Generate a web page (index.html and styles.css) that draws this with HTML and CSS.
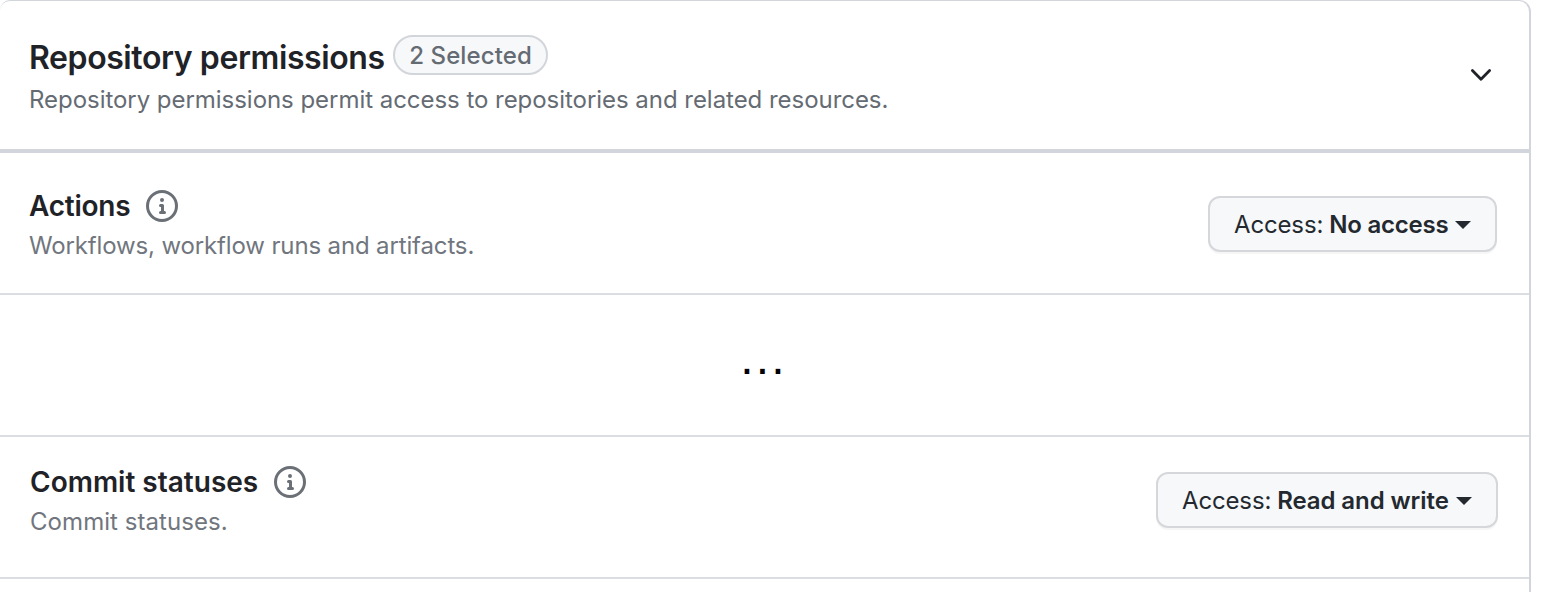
FILE: index.html
```html
<!DOCTYPE html>
<html lang="en">
<head>
<meta charset="utf-8">
<title>Repository permissions</title>
<link rel="stylesheet" href="styles.css">
</head>
<body>
<main class="panel">
  <header class="row head">
    <div class="info">
      <div class="title-line"><h1 class="title">Repository permissions</h1><span class="badge"><span class="badge-text">2 Selected</span></span></div>
      <p class="desc lead">Repository permissions permit access to repositories and related resources.</p>
    </div>
    <svg class="chevron" width="22" height="14" viewBox="0 0 22 14"><path d="M2.4 2.5l8.6 8.7 8.6-8.7" fill="none" stroke="#1f2328" stroke-width="2.8" stroke-linecap="round" stroke-linejoin="round"/></svg>
  </header>
  <section class="row actions">
    <div class="info">
      <div class="title-line"><h2 class="name name-actions">Actions</h2><svg class="icon" width="32" height="32" viewBox="0 0 16 16" fill="#6b7076"><path d="M0 8a8 8 0 1 1 16 0A8 8 0 0 1 0 8Zm8-6.5a6.5 6.5 0 1 0 0 13 6.5 6.5 0 0 0 0-13ZM6.5 7.75A.75.75 0 0 1 7.25 7h1a.75.75 0 0 1 .75.75v2.75h.25a.75.75 0 0 1 0 1.5h-2a.75.75 0 0 1 0-1.5h.25v-2h-.25a.75.75 0 0 1-.75-.75ZM8 6a1 1 0 1 1 0-2 1 1 0 0 1 0 2Z"/></svg></div>
      <p class="desc desc-actions">Workflows, workflow runs and artifacts.</p>
    </div>
    <button class="access access-none"><span class="label">Access:</span><strong class="value">No access</strong><span class="caret"></span></button>
  </section>
  <section class="row more"><span class="ellipsis">...</span></section>
  <section class="row statuses">
    <div class="info">
      <div class="title-line"><h2 class="name name-statuses">Commit statuses</h2><svg class="icon" width="32" height="32" viewBox="0 0 16 16" fill="#6b7076"><path d="M0 8a8 8 0 1 1 16 0A8 8 0 0 1 0 8Zm8-6.5a6.5 6.5 0 1 0 0 13 6.5 6.5 0 0 0 0-13ZM6.5 7.75A.75.75 0 0 1 7.25 7h1a.75.75 0 0 1 .75.75v2.75h.25a.75.75 0 0 1 0 1.5h-2a.75.75 0 0 1 0-1.5h.25v-2h-.25a.75.75 0 0 1-.75-.75ZM8 6a1 1 0 1 1 0-2 1 1 0 0 1 0 2Z"/></svg></div>
      <p class="desc desc-statuses">Commit statuses.</p>
    </div>
    <button class="access access-write"><span class="label">Access:</span><strong class="value">Read and write</strong><span class="caret"></span></button>
  </section>
</main>
</body>
</html>
```
FILE: styles.css
```css
* { box-sizing: border-box; }
body { margin: 0; background: #fff; color: #1f2328; font-family: Inter, "Liberation Sans", sans-serif; overflow: hidden; }
h1, h2, p { margin: 0; white-space: nowrap; }
.panel { width: 1531px; height: 620px; border: 2px solid #d2d5da; border-left: 0; border-top-width: 1px; border-radius: 10px 12px 0 0; }
.row { display: flex; justify-content: space-between; align-items: flex-start; border-bottom: 2px solid #dadde1; }
.title-line { display: flex; align-items: center; }
.head { height: 152px; padding: 34px 37px 0 29px; border-bottom: 4px solid #d2d5db; }
.head .title-line { height: 40px; }
.title { font-size: 32px; font-weight: 600; line-height: 40px; width: 364px; padding-top: 5px; letter-spacing: -.41px; }
.badge { width: 155px; height: 40px; border: 2px solid #d2d5da; border-radius: 20px; background: #f6f8fa; color: #656b73; font-size: 24px; font-weight: 500; line-height: 37px; text-align: center; white-space: nowrap; letter-spacing: .1px; }
.desc { color: #656b73; font-size: 24px; line-height: 32px; }
.lead { margin-top: 9px; letter-spacing: -.04px; }
.chevron { margin-top: 33px; }
.actions { height: 142px; padding: 36px 32px 0 29px; }
.statuses { height: 142px; padding: 28px 31px 0 30px; }
.name { font-size: 28px; font-weight: 600; line-height: 34px; }
.name-actions { width: 117px; letter-spacing: -.23px; }
.name-statuses { width: 244px; }
.icon { flex: none; }
.info .desc-actions, .info .desc-statuses { margin-top: 7px; color: #71767e; }
.desc-actions { letter-spacing: -.14px; }
.desc-statuses { letter-spacing: .06px; }
.more { height: 142px; padding: 35px 2px 0 0; justify-content: center; }
.ellipsis { color: #000; font: 400 48px/56px "Liberation Sans", sans-serif; letter-spacing: 2.2px; }
.access { display: flex; align-items: center; height: 56px; padding: 2px 24px 0; border: 2px solid #d5d7da; border-radius: 12px; background: #f6f8fa; box-shadow: 0 2px 0 rgba(31,35,40,.04); color: #24292f; font: 400 24px/36px Inter, sans-serif; white-space: nowrap; }
.access-none { width: 289px; margin-top: 7px; }
.access-write { width: 342px; margin-top: 7px; }
.label { letter-spacing: -.15px; }
.value { font-weight: 600; margin-left: 6px; letter-spacing: -.2px; }
.access-write .value { letter-spacing: -.08px; }
.caret { margin-left: auto; border: 8px solid transparent; border-top-color: #24292f; border-bottom: 0; }
```
